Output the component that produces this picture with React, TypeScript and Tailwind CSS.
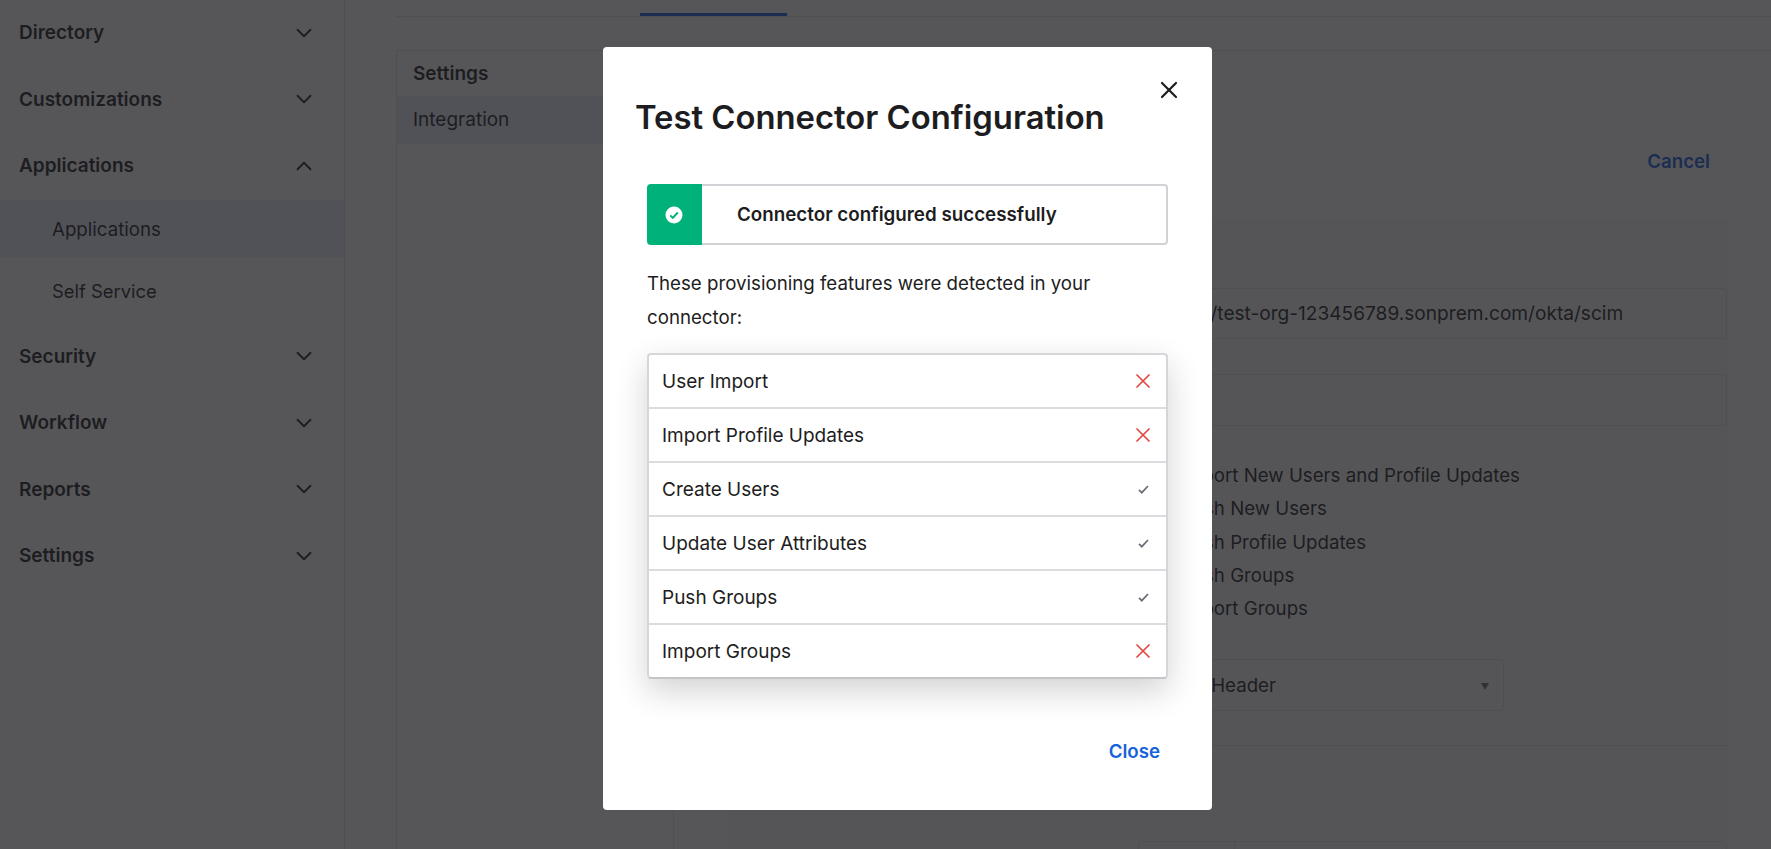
import { ChevronDown, ChevronUp, X } from 'lucide-react';

const navTop = ['Directory', 'Customizations'];
const navBottom = ['Security', 'Workflow', 'Reports', 'Settings'];

const features = [
  { name: 'User Import', ok: false },
  { name: 'Import Profile Updates', ok: false },
  { name: 'Create Users', ok: true },
  { name: 'Update User Attributes', ok: true },
  { name: 'Push Groups', ok: true },
  { name: 'Import Groups', ok: false },
];

const provisioning = [
  'Import New Users and Profile Updates',
  'Push New Users',
  'Push Profile Updates',
  'Push Groups',
  'Import Groups',
];

function NavItem({ label, open }: { label: string; open?: boolean }) {
  return (
    <div className="flex h-[66.5px] items-center justify-between pl-[19px] pr-[27px]">
      <span className="text-[19px] font-semibold text-[#1d1d21]">{label}</span>
      {open ? (
        <ChevronUp className="-mt-px h-[26px] w-[26px] text-[#1d1d21]" strokeWidth={1.7} />
      ) : (
        <ChevronDown className="-mt-px h-[26px] w-[26px] text-[#1d1d21]" strokeWidth={1.7} />
      )}
    </div>
  );
}

function SuccessIcon() {
  return (
    <svg width="18" height="18" viewBox="0 0 18 18">
      <circle cx="9" cy="9" r="8.5" fill="#ffffff" />
      <path d="M5.2 9.4l2.6 2.5 5-5.4" fill="none" stroke="#00b27a" strokeWidth="2" />
    </svg>
  );
}

function SmallCheck() {
  return (
    <svg width="11" height="9" viewBox="0 0 11 9">
      <path d="M1 4.8l2.8 2.8L10 1" fill="none" stroke="#6e6e78" strokeWidth="1.8" />
    </svg>
  );
}

export default function App() {
  return (
    <div className="relative flex h-[849px] w-[1771px] overflow-hidden bg-white font-['Inter',sans-serif] text-[#1d1d21]">
      {/* Sidebar */}
      <aside className="w-[345px] shrink-0 border-r border-[#e1e1e6]">
        {navTop.map((label) => (
          <NavItem key={label} label={label} />
        ))}
        <NavItem label="Applications" open />
        <div className="flex flex-col gap-[6.5px]">
          <div className="flex h-[57px] items-center bg-[#e9eefa] pl-[52px] pt-[4px] text-[18.7px]">Applications</div>
          <div className="flex h-[57px] items-center pl-[52px] text-[18.4px]">Self Service</div>
        </div>
        <div className="pt-[3.5px]">
          {navBottom.map((label) => (
            <NavItem key={label} label={label} />
          ))}
        </div>
      </aside>

      {/* Page behind the dialog */}
      <main className="min-w-0 flex-1 pl-[51px]">
        <div className="flex h-[17px] items-end border-b border-[#e1e1e6] pl-[244px]">
          <div className="h-[3px] w-[147px] bg-[#1662dd]" />
        </div>
        <div className="mt-[33px] flex h-[900px] border-l border-t border-[#e1e1e6]">
          <div className="w-[277px] shrink-0 border-r border-[#e1e1e6]">
            <div className="flex h-[45px] items-center pl-[16px] pt-[2px] text-[19px] font-semibold">Settings</div>
            <div className="flex h-[48px] items-center bg-[#e9eefa] pl-[16px] text-[19px]">Integration</div>
          </div>
          <div className="min-w-0 flex-1 pl-[53px] pr-[42px]">
            <div className="flex h-[169px] items-start justify-end pr-[19px] pt-[99px]">
              <span className="text-[18.7px] font-semibold leading-[24px] text-[#1662dd]">Cancel</span>
            </div>
            <div className="bg-[#fbfbfb] pl-[411px] pr-[2px] pt-[68px]">
              <div className="flex h-[51px] items-center rounded border border-[#e1e1e6] pl-[14px] text-[19.1px]">
                https://test-org-123456789.sonprem.com/okta/scim
              </div>
              <div className="mt-[35px] h-[52px] rounded border border-[#e1e1e6]" />
              <div className="mt-[33px] pl-[43px] text-[18.7px] leading-[33.3px]">
                {provisioning.map((item) => (
                  <div key={item}>{item}</div>
                ))}
              </div>
              <div className="mt-[34px] flex h-[52px] w-[366px] items-center justify-between rounded border border-[#e1e1e6] pl-[17px] pr-[14px] pt-[2px] text-[18.7px]">
                <span>HTTP Header</span>
                <span className="h-0 w-0 border-x-[4px] border-t-[7px] border-x-transparent border-t-[#6e6e78]" />
              </div>
              <div className="mt-[34px] border-t border-[#e1e1e6]" />
              <div className="mt-[95px] flex h-[51px] rounded border border-[#e1e1e6]">
                <div className="w-[96px] border-r border-[#e1e1e6]" />
              </div>
            </div>
          </div>
        </div>
      </main>

      {/* Dim overlay */}
      <div className="absolute inset-0 bg-[#1d1d21]/75" />

      {/* Dialog */}
      <div className="absolute left-[603px] top-[47px] h-[763px] w-[609px] rounded bg-white">
        <button type="button" className="absolute right-[29px] top-[29px] text-[#1d1d21]">
          <X className="h-[28px] w-[28px]" strokeWidth={1.9} />
        </button>
        <h1 className="pl-[32px] pt-[50px] text-[32.8px] font-semibold leading-[40px]">Test Connector Configuration</h1>

        <div className="px-[44px]">
          <div className="mt-[47px] flex h-[61px]">
            <div className="flex w-[55px] shrink-0 items-center justify-center rounded-l bg-[#00b27a] pr-[1px]">
              <SuccessIcon />
            </div>
            <div className="flex flex-1 items-center rounded-r border-2 border-l-0 border-[#d2d2d6] pl-[35px] pt-[2px] text-[18.8px] font-semibold">
              Connector configured successfully
            </div>
          </div>

          <p className="mt-[22px] text-[18.7px] leading-[33.5px]">
            These provisioning features were detected in your connector:
          </p>

          <ul className="mt-[19px] flex h-[326px] flex-col overflow-hidden rounded border-2 border-[#d6d6da] border-b-[#c4c4c9] shadow-[0_12px_32px_rgba(29,29,33,0.2)]">
            {features.map((f, i) => (
              <li
                key={f.name}
                className={`flex flex-1 items-center justify-between pl-[13px] pr-[15px] text-[19px] ${i > 0 ? 'border-t-2 border-[#dcdce0]' : ''}`}
              >
                <span className="pt-[2px]">{f.name}</span>
                <span className="flex w-[16px] justify-center">
                  {f.ok ? <SmallCheck /> : <X className="h-[24px] w-[24px] shrink-0 text-[#e34843]" strokeWidth={1.75} />}
                </span>
              </li>
            ))}
          </ul>

          <div className="mt-[61px] flex justify-end pr-[8px]">
            <button type="button" className="text-[18.7px] font-semibold leading-[24px] text-[#1662dd]">
              Close
            </button>
          </div>
        </div>
      </div>
    </div>
  );
}
